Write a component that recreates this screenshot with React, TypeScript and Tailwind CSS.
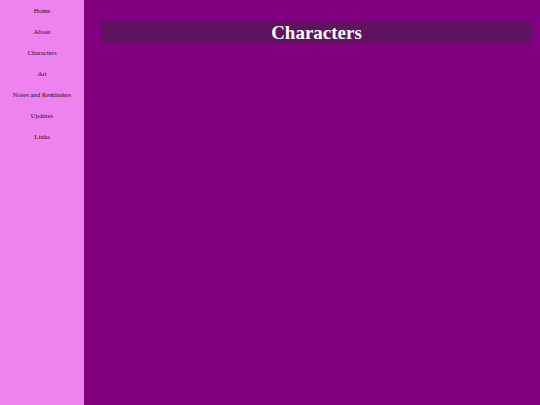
const links = ["Home", "About", "Characters", "Art", "Notes and Reminders", "Updates", "Links"];

export default function App() {
  return (
    <div className="flex h-[405px] w-[540px] overflow-hidden font-['Liberation_Serif',serif]">
      <nav className="flex w-[84px] shrink-0 flex-col bg-[#ee82ee] pt-[1px]">
        {links.map((link) => (
          <a
            key={link}
            href="#"
            className="flex h-[21px] items-center justify-center whitespace-nowrap text-[6.8px] text-[#2a0f2a]"
          >
            {link}
          </a>
        ))}
      </nav>
      <main className="flex-1 bg-[#800080] pt-[21px] pl-[17px] pr-[8px]">
        <h1 className="flex h-[22px] items-center justify-center bg-[#601260] text-[19px] font-bold leading-none text-white">
          Characters
        </h1>
      </main>
    </div>
  );
}
